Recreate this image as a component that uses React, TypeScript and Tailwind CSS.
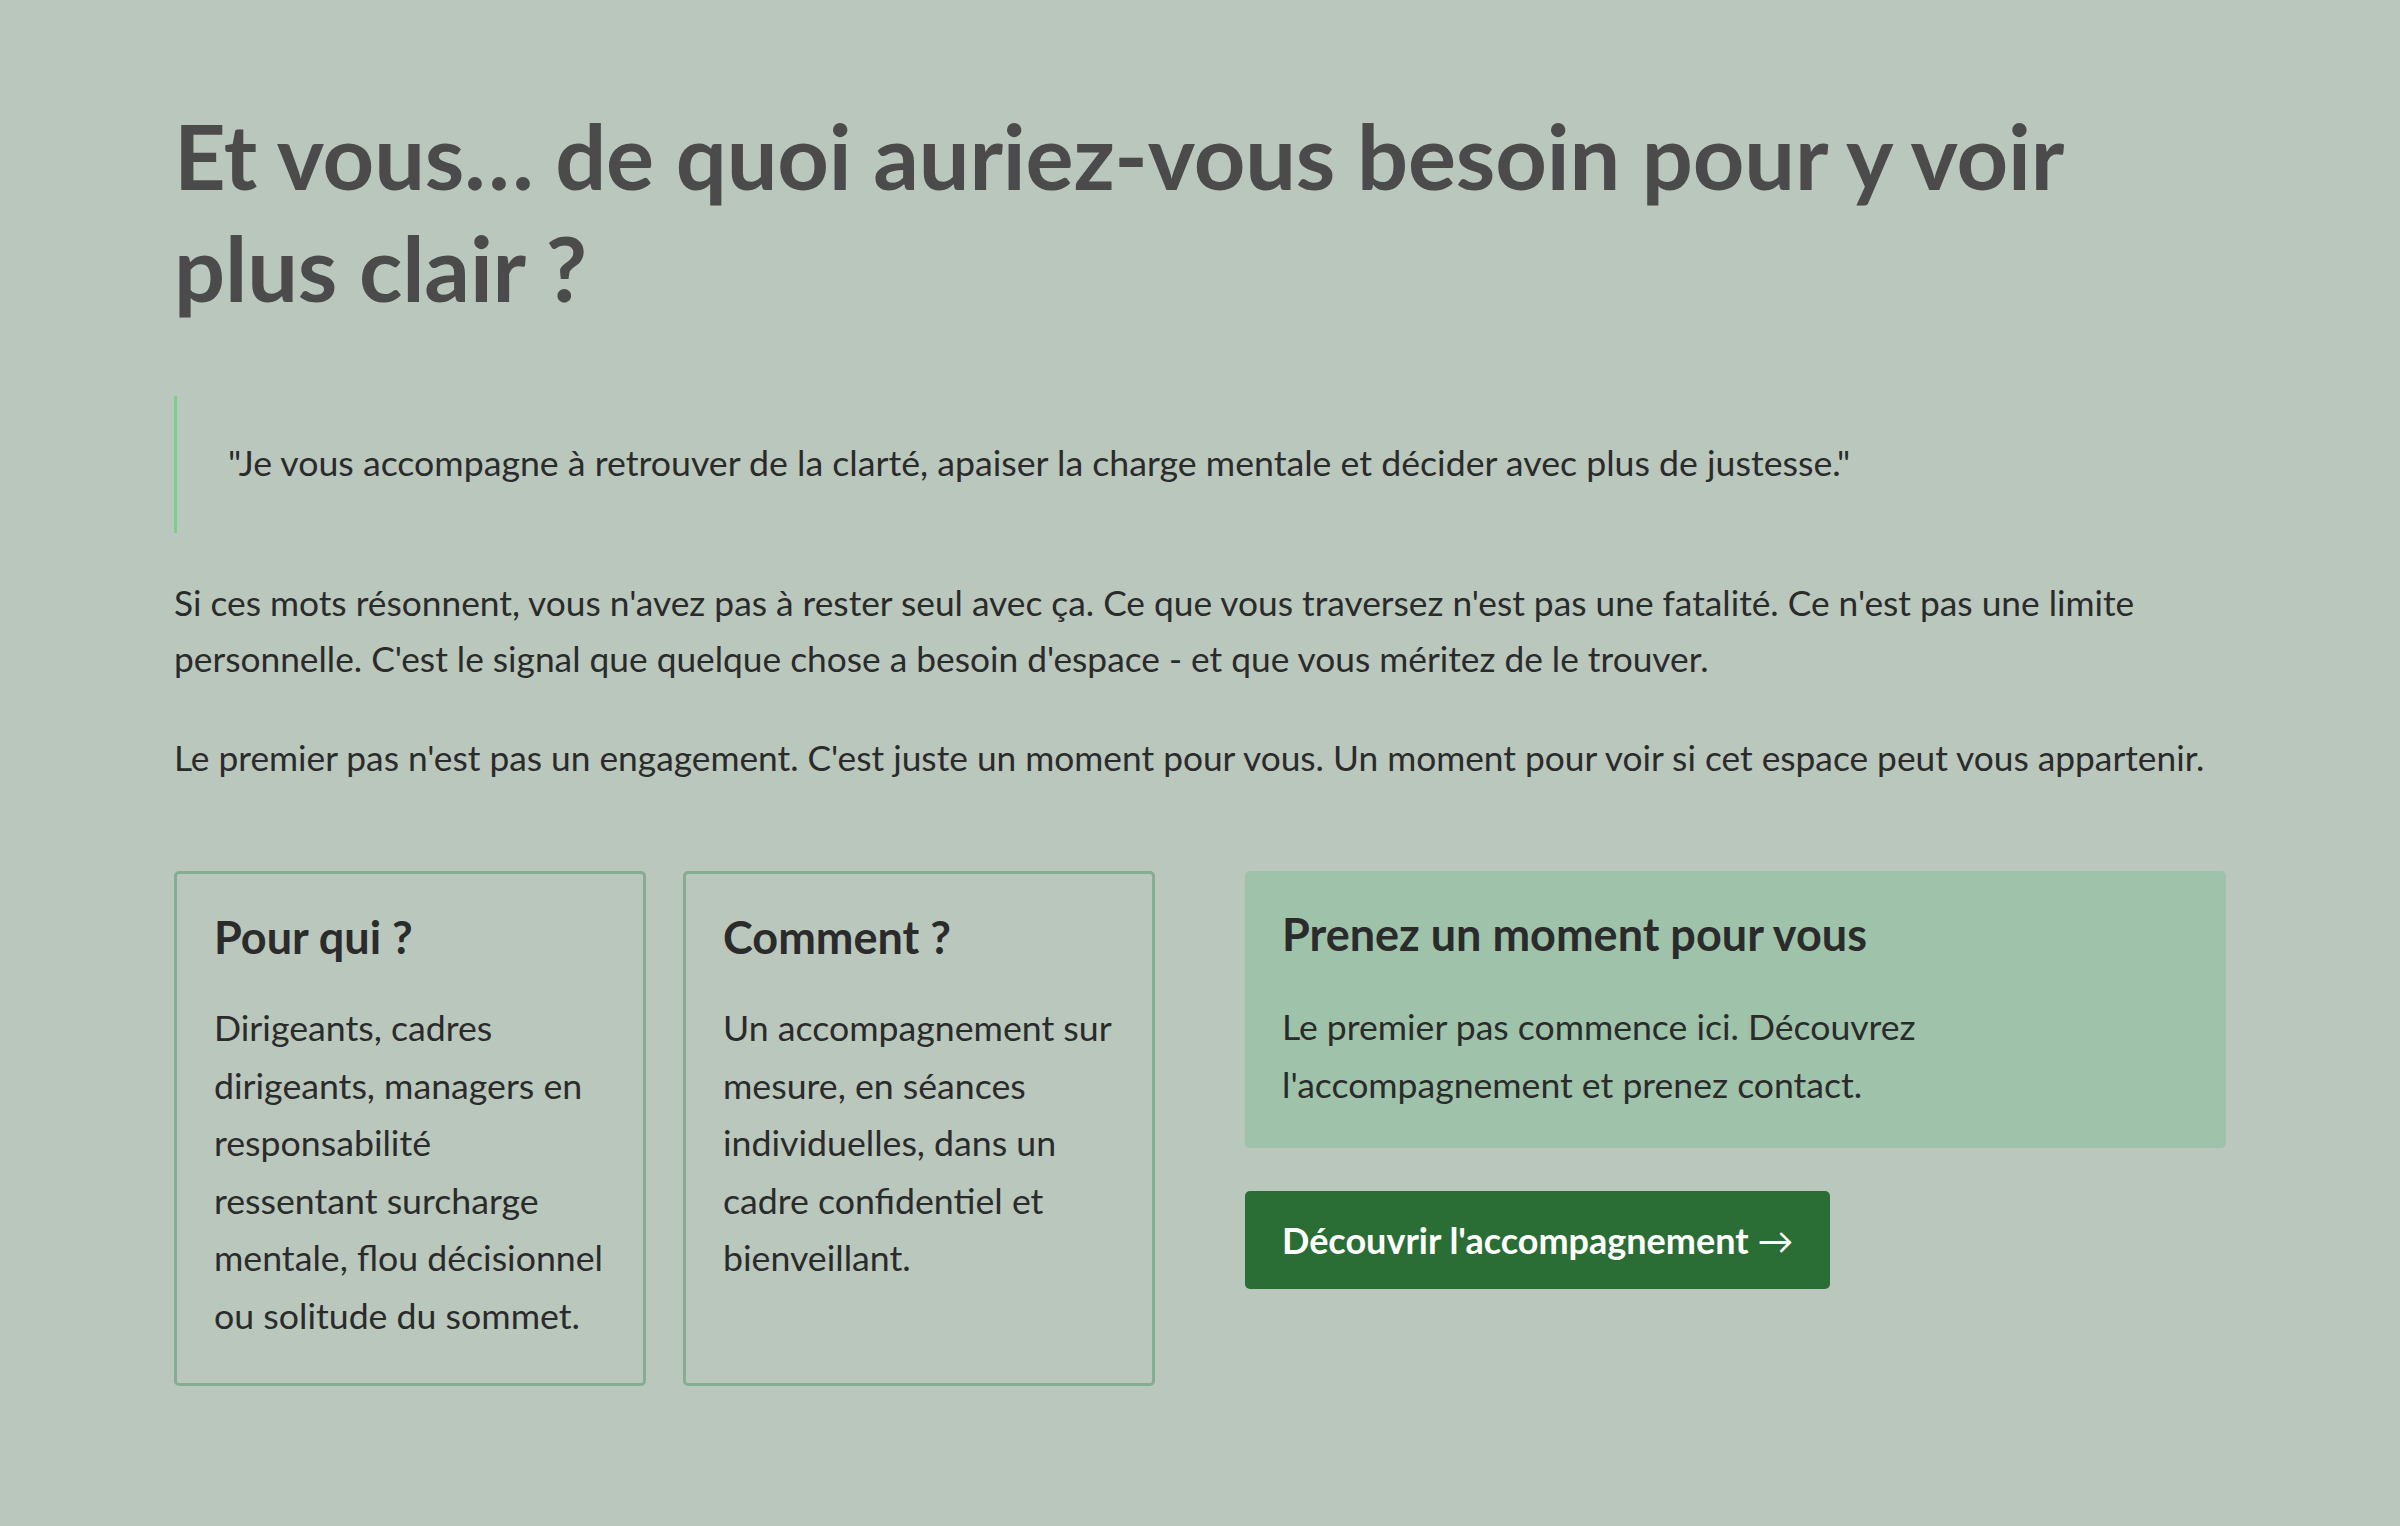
import React from 'react';

const cards = [
  {
    title: 'Pour qui ?',
    body: 'Dirigeants, cadres dirigeants, managers en responsabilité\nressentant surcharge mentale, flou décisionnel ou solitude du sommet.',
  },
  {
    title: 'Comment ?',
    body: 'Un accompagnement sur mesure, en séances individuelles, dans un cadre confidentiel et bienveillant.',
  },
];

export default function App() {
  return (
    <div className="min-h-screen bg-[#bac7bd] font-['Lato','Noto_Sans',sans-serif] text-[#2b2b2b]">
      <section className="mx-auto w-[2052px] pt-[99px] pb-[120px]">
        {/* Heading */}
        <h1 className="text-[90px] leading-[112px] font-bold text-[#4b4b4b] tracking-[-0.15px]">
          Et vous… de quoi auriez-vous besoin pour y voir plus clair ?
        </h1>

        {/* Quote */}
        <blockquote className="mt-[73px] border-l-[3px] border-[#7bcf86] pl-[51px] pt-[41px] pb-[44px] text-[35.7px] leading-[52px]">
          "Je vous accompagne à retrouver de la clarté, apaiser la charge mentale et décider avec plus de justesse."
        </blockquote>

        {/* Intro text */}
        <div className="mt-[42px] flex flex-col gap-[43px] text-[35.3px] leading-[56px]">
          <p>
            Si ces mots résonnent, vous n'avez pas à rester seul avec ça. Ce que vous traversez n'est pas une fatalité. Ce n'est pas une limite personnelle. C'est le signal que quelque chose a besoin d'espace - et que vous méritez de le trouver.
          </p>
          <p>
            Le premier pas n'est pas un engagement. C'est juste un moment pour vous. Un moment pour voir si cet espace peut vous appartenir.
          </p>
        </div>

        {/* Cards */}
        <div className="mt-[85px] grid grid-cols-2 gap-[90px] items-start">
          <div className="grid grid-cols-2 gap-[37px]">
            {cards.map(card => (
              <div
                key={card.title}
                className="h-[515px] rounded-[5px] border-[3px] border-[#86ad93] pl-[37px] pr-[30px] pt-[36px]"
              >
                <h3 className="text-[45px] leading-[54px] font-bold">{card.title}</h3>
                <p className="mt-[35px] whitespace-pre-line text-[35.7px] leading-[57.6px]">{card.body}</p>
              </div>
            ))}
          </div>

          <div className="flex flex-col items-start gap-[43px]">
            <div className="w-full rounded-[5px] bg-[#9fc3aa] px-[37px] pt-[36px] pb-[34px]">
              <h3 className="text-[45px] leading-[54px] font-bold">Prenez un moment pour vous</h3>
              <p className="mt-[37px] max-w-[700px] text-[35.6px] leading-[58px]">
                Le premier pas commence ici. Découvrez l'accompagnement et prenez contact.
              </p>
            </div>
            <a
              href="#"
              className="rounded-[5px] bg-[#2b6e35] px-[37px] py-[26px] text-[36px] leading-[46px] font-bold text-white"
            >
              Découvrir l'accompagnement <span className="font-normal">→</span>
            </a>
          </div>
        </div>
      </section>
    </div>
  );
}
